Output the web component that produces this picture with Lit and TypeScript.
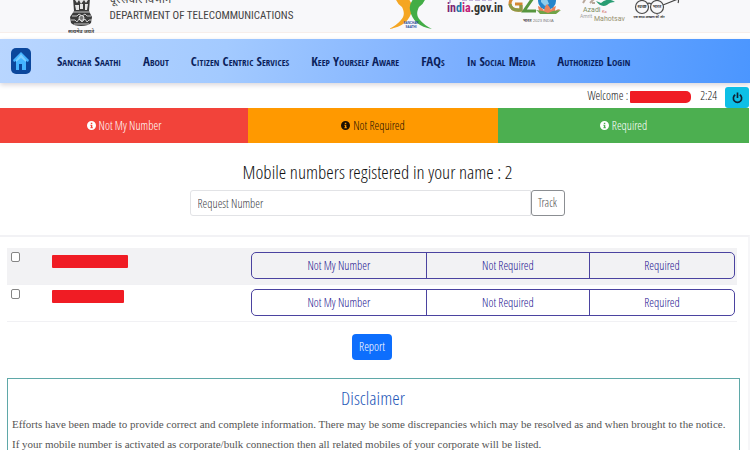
import { LitElement, html, css } from "lit";
import { customElement, property } from "lit/decorators.js";

const infoIcon = html`<svg class="info" viewBox="0 0 16 16" aria-hidden="true">
  <path fill="currentColor" fill-rule="evenodd" d="M8 0a8 8 0 1 0 0 16A8 8 0 0 0 8 0zM6.8 3h2.6v2.4H6.8zM6 6.600h3.400v4.600h1V13H6v-1.800h1V8.400H6z" />
</svg>`;

@customElement("site-header")
export class SiteHeader extends LitElement {
  static styles = css`
    :host { display: block; border-bottom: 1px solid #f7eeea; background: #f8f8fa; }
    .bar { display: flex; align-items: flex-start; height: 35px; padding-left: 9%; margin-bottom: -3px; }
    .brand { display: flex; flex: 0 0 47%; gap: 15px; min-width: 0; }
    .emblem { width: 27px; height: 36px; flex: none; }
    .names { display: flex; flex-direction: column; justify-content: flex-end; height: 24px; color: #444; font: 11px/16px "Roboto Condensed", Roboto, sans-serif; white-space: nowrap; }
    .logos { display: flex; flex: 1; }
    .logos svg { height: 32px; flex: none; }
    .saathi { width: 58px; }
    .india { width: 60px; }
    .g20 { width: 68px; }
    .azadi { width: 58px; }
    .swachh { width: 56px; }
  `;
  render() {
    return html`<div class="bar">
      <div class="brand">
        <svg class="emblem" viewBox="0 0 27 36" role="img" aria-label="State Emblem of India">
          <path d="M5-2h17l-1 13 3 6-1 6q-3 3-10 3T3 23l-1-6 4-6z" fill="#3b3b3b" />
          <path d="M7 0l2 3 2-3M11 0l2 4 3-4M16 0l2 3 2-3M7 5h4v5H8zM12 4h3v5h-3zM17 4h3l-1 6h-2z" fill="#e4e4e4" />
          <path d="M5 12h17M4 16h5l2-2 3 2 3-2 2 2h4M3 20h4l2 2 2-3 3 3 3-3 2 3 2-2h3M6 24h15" fill="none" stroke="#c8c8c8" />
          <circle cx="13.500" cy="18" r="2.500" fill="#777" stroke="#e8e8e8" />
          <text x="13" y="33" text-anchor="middle" font-family="Noto Sans, sans-serif" font-size="5" font-weight="700" fill="#444">सत्यमेव जयते</text>
        </svg>
        <div class="names"><span>दूरसंचार विभाग</span><span>DEPARTMENT OF TELECOMMUNICATIONS</span></div>
      </div>
      <div class="logos">
        <svg class="saathi" viewBox="0 0 58 32" role="img" aria-label="Sanchar Saathi">
          <path d="M7-4q1 7 7 11c3 6 2 10-1 13q-4 5-12 9 20-3 23-19 1-5-2-9l-2-4-2 3Q13-2 11-5z" fill="#f5a623" />
          <path d="M38-4q-1 7-7 11c-3 6-2 10 1 13q4 5 12 9-19-3-22-19-1-5 2-9l2-4 2 3q4-2 6-5z" fill="#43ad46" />
          <circle cx="17" cy="1" r="3" fill="#f5a623" /><circle cx="29" cy="1" r="3" fill="#43ad46" />
          <text x="23" y="24" text-anchor="middle" font-family="Liberation Sans" font-size="3" font-weight="700" fill="#284b9b">SANCHAR</text>
          <text x="23" y="28" text-anchor="middle" font-family="Liberation Sans" font-size="3" font-weight="700" fill="#284b9b">SAATHI</text>
        </svg>
        <svg class="india" viewBox="0 0 60 32" role="img" aria-label="india.gov.in">
          <path d="M4-1v4M16 0h5M23 0h4M29 0h5M36 0h4M42 0h4" stroke="#8b6bb5" />
          <text x="1" y="12" font-family="Roboto Condensed, Roboto" font-size="12" font-weight="700"><tspan fill="#7d2470">in</tspan><tspan fill="#1d75a7">d</tspan><tspan fill="#c22178">ia</tspan><tspan fill="#333">.gov.in</tspan></text>
        </svg>
        <svg class="g20" viewBox="0 0 68 32" role="img" aria-label="G20">
          <path d="M15-3Q4-4 4 4q1 7 11 6V4H9" fill="none" stroke="#d48732" stroke-width="3" />
          <path d="M4 4q1 7 11 6V5" fill="none" stroke="#8a9a47" stroke-width="3" />
          <path d="M18-2h9L18 11h12" fill="none" stroke="#57963f" stroke-width="3" />
          <circle cx="41" cy="1" r="9" fill="#2585cb" />
          <path d="M35-3l6 2 2 5-4 2-4-4z" fill="#8fcdec" />
          <path d="M34 13q-2-5-2-7 5 2 6 5 0-4 3-7 3 3 4 6 1-3 5-4-1 3-1 5 2-2 5-2-2 3-5 5z" fill="#e9825b" />
          <path d="M34 14q-2-3-4-4l7 1 5 2 5-2 8-1-5 4z" fill="#70a348" />
          <text x="17" y="22" font-family="Noto Sans" font-size="4" font-weight="700" fill="#555">भारत</text>
          <text x="27" y="22" font-family="Liberation Sans" font-size="4" fill="#777">2023 INDIA</text>
        </svg>
        <svg class="azadi" viewBox="0 0 58 32" role="img" aria-label="Azadi Ka Amrit Mahotsav">
          <path d="M12-2l-3 5M16 3l4-4M18 3h3" stroke="#b9a89b" stroke-width="2" />
          <path d="M22 1l5 2q7-6 14-1-5 0-8 3-6 3-11-4z" fill="#289d73" />
          <text x="9" y="12" font-family="Roboto" font-size="7" fill="#7e8e65">Azadi</text>
          <text x="28" y="13" font-family="Roboto" font-size="4" fill="#d06b67">Ka</text>
          <text x="6" y="18" font-family="Roboto" font-size="5" fill="#a2a2a2">Amrit</text>
          <text x="20" y="21" font-family="Roboto" font-size="7" fill="#97916f">Mahotsav</text>
        </svg>
        <svg class="swachh" viewBox="0 0 56 32" role="img" aria-label="Swachh Bharat">
          <g fill="none" stroke="#4a4a4a" stroke-width="1.200"><circle cx="10" cy="7" r="6.500" /><circle cx="25" cy="7" r="6.500" /><path d="M15 4q2-2 4 0M31 5L46-1q1 2 0 4" /></g>
          <text x="10" y="8" text-anchor="middle" font-family="Noto Sans" font-size="4" font-weight="700" fill="#444">स्वच्छ</text>
          <text x="25" y="8" text-anchor="middle" font-family="Noto Sans" font-size="4" font-weight="700" fill="#444">भारत</text>
          <text x="17" y="18" text-anchor="middle" font-family="Noto Sans" font-size="3" font-weight="700" fill="#333">एक कदम स्वच्छता की ओर</text>
        </svg>
      </div>
    </div>`;
  }
}

@customElement("main-nav")
export class MainNav extends LitElement {
  static styles = css`
    :host { display: block; margin-top: 6px; background: linear-gradient(100deg, #b9d6ff 0%, #a3caff 30%, #7db0ff 60%, #4b96ff 100%); box-shadow: 0 2px 5px #d9d5da; }
    nav { display: flex; align-items: center; height: 44px; padding-left: 10px; gap: 22px; }
    a { color: #0b1f5c; font: 700 13px/16px "Open Sans Condensed", Lato, sans-serif; font-variant-caps: small-caps; text-decoration: none; white-space: nowrap; }
    .home { display: block; width: 22px; height: 26px; margin-right: 3px; }
    .home svg { display: block; width: 100%; height: 100%; }
  `;
  render() {
    const links = ["Sanchar Saathi", "About", "Citizen Centric Services", "Keep Yourself Aware", "FAQs", "In Social Media", "Authorized Login"];
    return html`<nav aria-label="Main">
      <a class="home" href="#home" aria-label="Home"><svg viewBox="0 0 22 26">
        <rect x="1" y="0" width="20" height="26" rx="5" fill="#0b479c" />
        <path d="M11 4l8 8-1 2-2-1v9h-4v-6h-3v6H6v-9l-2 1-1-2z" fill="#45b4ff" />
        <path d="M11 6l5 6v2l-5-4-5 4v-2z" fill="#7accff" />
      </svg></a>
      ${links.map((t) => html`<a href="#${t.toLowerCase().replaceAll(" ", "-")}">${t}</a>`)}
    </nav>`;
  }
}

@customElement("number-table")
export class NumberTable extends LitElement {
  @property({ type: Array }) rows = [{ width: 76 }, { width: 72 }];
  static styles = css`
    :host { display: block; }
    table { width: 100%; border-collapse: collapse; table-layout: fixed; }
    .pick { width: 6%; }
    .number { width: 27%; }
    tr { border-bottom: 1px solid #f1f1f4; }
    tr:nth-child(odd) { background: #f2f2f4; }
    td { height: 36px; padding: 0; vertical-align: top; }
    td:last-child { padding: 4px 2px 0 3px; height: 32px; }
    input { display: block; width: 9px; height: 10px; margin: 4px; appearance: none; box-sizing: border-box; border: 1px solid #858585; border-radius: 2px; background: #fff; }
    .hidden-number { display: block; height: 13px; margin: 7px 0 0 1px; border-radius: 1px; background: #f01c24; }
    tr:last-child .hidden-number { margin-top: 5px; }
    .group { display: flex; overflow: hidden; border: 1px solid #4b43a0; border-radius: 5px; }
    button { flex: 175 1 0; height: 25px; padding: 0; border: 0; background: none; color: #1d1390; font: 12px/16px var(--ui); }
    button + button { flex-grow: 163; border-left: 1px solid #4b43a0; }
    button:last-child { flex-grow: 145; }
  `;
  render() {
    return html`<table aria-label="Registered mobile numbers">
      <colgroup><col class="pick" /><col class="number" /><col /></colgroup>
      <tbody>${this.rows.map((r, i) => html`<tr>
        <td><input type="checkbox" aria-label="Select number ${i + 1}" /></td>
        <td><span class="hidden-number" style="width:${r.width}px"></span></td>
        <td><div class="group"><button>Not My Number</button><button>Not Required</button><button>Required</button></div></td>
      </tr>`)}</tbody>
    </table>`;
  }
}

@customElement("app-root")
export class AppRoot extends LitElement {
  static styles = css`
    :host { --ui: "Open Sans Condensed Light", "Roboto Condensed", Roboto, "Noto Sans", sans-serif; display: block; height: 100vh; overflow: hidden; background: #fff; color: #111; font: 12px/16px var(--ui); }
    .user { display: flex; align-items: center; justify-content: flex-end; height: 25px; padding-right: 1px; }
    .name { width: 61px; height: 12px; margin: 2px 9px 0 2px; border-radius: 1px 5px 5px 1px; background: #f01c24; }
    .power { display: grid; place-items: center; align-self: flex-end; width: 24px; height: 21px; margin-left: 8px; padding: 0; border: 0; border-radius: 3px; background: #0dbfe6; color: #123; }
    .power svg { width: 11px; height: 12px; }
    .legend { display: grid; grid-template-columns: 248fr 250fr 251fr; margin-right: 1px; }
    .legend div { display: flex; align-items: center; justify-content: center; gap: 3px; height: 35px; color: #fff; }
    .legend .no { background: #f2433a; }
    .legend .maybe { background: #ff9900; color: #1c1000; }
    .legend .yes { background: #4caf50; }
    .info { width: 9px; height: 11px; }
    h1 { margin: 18px 0 6px; padding-left: 5px; font-size: 19px; font-weight: 400; line-height: 23px; text-align: center; }
    form { display: flex; width: 50%; margin: 0 auto; padding-left: 4px; }
    form input { flex: 1; min-width: 0; height: 26px; box-sizing: border-box; padding: 0 7px; border: 1px solid #e2e3e6; border-radius: 3px 0 0 3px; color: #333; font: inherit; }
    form input::placeholder { color: #404045; opacity: 1; }
    form button { width: 34px; padding: 0; border: 1px solid #8b8e92; border-radius: 3px; background: #fff; color: #555; font: inherit; }
    .results { margin-top: 19px; border-top: 2px solid #f2f2f5; padding: 11px 11px 0 7px; border-right: 2px solid #f6f6f8; }
    .report { display: block; width: 40px; height: 26px; margin: 12px auto 18px; padding: 0; border: 0; border-radius: 4px; background: #0d6efd; color: #fff; font: inherit; }
    .disclaimer { margin-right: -3px; padding: 9px 5px 40px 4px; border: 1px solid #5fa8a8; border-bottom: 0; }
    h2 { margin: 0 0 6px; color: #1f58b8; font-size: 19px; font-weight: 400; line-height: 20px; text-align: center; }
    p { margin: 0; color: #555; font: 11px/20px "Liberation Serif", serif; }
  `;
  render() {
    return html`<site-header></site-header>
      <main-nav></main-nav>
      <div class="user"><span>Welcome :</span><span class="name"></span><span>2:24</span>
        <button class="power" aria-label="Log out"><svg viewBox="0 0 12 12"><path d="M3.500 2.500a4.500 4.500 0 1 0 5 0M6 0v6" fill="none" stroke="currentColor" stroke-width="1.800" /></svg></button>
      </div>
      <div class="legend">
        <div class="no">${infoIcon}Not My Number</div>
        <div class="maybe">${infoIcon}Not Required</div>
        <div class="yes">${infoIcon}Required</div>
      </div>
      <main>
        <h1>Mobile numbers registered in your name : 2</h1>
        <form><input type="text" placeholder="Request Number" aria-label="Request Number" /><button type="button">Track</button></form>
        <section class="results">
          <number-table></number-table>
          <button class="report">Report</button>
          <div class="disclaimer">
            <h2>Disclaimer</h2>
            <p>Efforts have been made to provide correct and complete information. There may be some discrepancies which may be resolved as and when brought to the notice.</p>
            <p>If your mobile number is activated as corporate/bulk connection then all related mobiles of your corporate will be listed.</p>
          </div>
        </section>
      </main>`;
  }
}
